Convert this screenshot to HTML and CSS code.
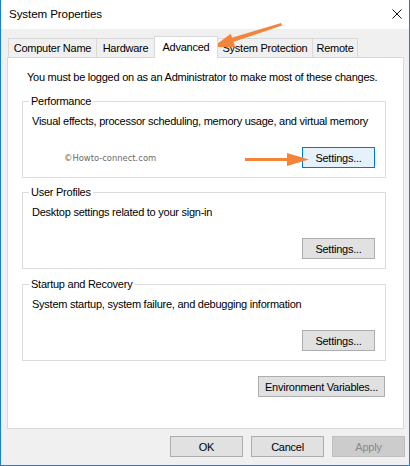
FILE: index.html
```html
<!DOCTYPE html>
<html lang="en">
<head>
  <meta charset="UTF-8">
  <meta name="viewport" content="width=device-width, initial-scale=1.0">
  <title>System Properties</title>
  <link rel="stylesheet" href="styles.css">
</head>
<body>
<div class="window">
  <div class="titlebar">
    <span class="title">System Properties</span>
    <svg class="close" width="10" height="10" viewBox="0 0 10 10">
      <path d="M0.5 0.5 L9.5 9.5 M9.5 0.5 L0.5 9.5" stroke="#111" stroke-width="1" fill="none"/>
    </svg>
  </div>

  <div class="content">
    <div class="tabs">
      <div class="tab tab-name">Computer Name</div>
      <div class="tab tab-hardware">Hardware</div>
      <div class="tab tab-advanced selected">Advanced</div>
      <div class="tab tab-protection">System Protection</div>
      <div class="tab tab-remote">Remote</div>
    </div>

    <div class="panel">
      <p class="note">You must be logged on as an Administrator to make most of these changes.</p>

      <fieldset class="group">
        <legend>Performance</legend>
        <p class="desc">Visual effects, processor scheduling, memory usage, and virtual memory</p>
        <div class="group-actions">
          <span class="watermark">©Howto-connect.com</span>
          <button class="btn focus">Settings...</button>
        </div>
      </fieldset>

      <fieldset class="group">
        <legend>User Profiles</legend>
        <p class="desc">Desktop settings related to your sign-in</p>
        <div class="group-actions">
          <button class="btn">Settings...</button>
        </div>
      </fieldset>

      <fieldset class="group group-last">
        <legend>Startup and Recovery</legend>
        <p class="desc">System startup, system failure, and debugging information</p>
        <div class="group-actions">
          <button class="btn">Settings...</button>
        </div>
      </fieldset>

      <div class="panel-actions">
        <button class="btn btn-wide">Environment Variables...</button>
      </div>
    </div>

    <div class="dialog-actions">
      <button class="btn">OK</button>
      <button class="btn">Cancel</button>
      <button class="btn" disabled>Apply</button>
    </div>
  </div>

  <!-- orange markers drawn over the dialog -->
  <svg class="marks" width="410" height="466" viewBox="0 0 410 466">
    <polygon points="281,23 282,25.5 233,42 231,38" fill="#f5843b"/>
    <polygon points="213,47 230.8,33.7 235.2,46.9" fill="#f5843b"/>
    <rect x="245" y="158" width="44" height="3" fill="#f5843b"/>
    <polygon points="287,153 309,159.5 287,166" fill="#f5843b"/>
  </svg>
</div>
</body>
</html>
```

FILE: styles.css
```css
body {
  margin: 0;
  font-family: "Liberation Sans", Arial, sans-serif;
  font-size: 11px;
  letter-spacing: -0.25px;
  color: #000;
  background: #fff;
}
.window {
  position: relative;
  width: 410px;
  height: 466px;
  box-sizing: border-box;
  border: 1px solid #1a7fd4;
  border-top: none;
  background: #f0f0f0;
  white-space: nowrap;
}
.titlebar {
  height: 29px;
  background: #fff;
  display: flex;
  align-items: center;
  justify-content: space-between;
  padding: 0 7px 2px 8px;
  box-sizing: border-box;
}
.title { font-size: 11.6px; letter-spacing: -0.1px; }
.close { display: block; }

.content { padding: 7px 5px 0 6px; }

.tabs {
  display: flex;
  align-items: flex-end;
  height: 21px;
  padding-left: 1px;
}
.tab {
  height: 19px;
  box-sizing: border-box;
  border: 1px solid #d9d9d9;
  border-bottom: none;
  background: #f0f0f0;
  display: flex;
  align-items: center;
  justify-content: center;
  margin-left: -1px;
}
.tab:first-child { margin-left: 0; }
.tab.selected {
  position: relative;
  z-index: 1;
  height: 22px;
  margin-bottom: -1px;
  padding-bottom: 2px;
  background: #fff;
}
.tab-name { width: 89px; }
.tab-hardware { width: 59px; }
.tab-advanced { width: 64px; }
.tab-protection { width: 96px; }
.tab-remote { width: 46px; }

.panel {
  height: 372px;
  box-sizing: border-box;
  border: 1px solid #d9d9d9;
  background: #fff;
  padding: 12px 17px 0 14px;
}
.note {
  margin: 0 0 9px 5px;
  line-height: 15px;
}

.group {
  margin: 0 0 7px 0;
  padding: 5px 10px 9px 9px;
  border: 1px solid #dcdcdc;
  min-width: 0;
}
.group-last { margin-top: 8px; }
.group legend {
  line-height: 15px;
  padding: 0 2px;
  margin-left: -3px;
}
.desc {
  margin: 0;
  line-height: 15px;
}
.group-actions {
  display: flex;
  align-items: center;
  justify-content: flex-end;
  margin-top: 18px;
}
.watermark {
  margin-right: auto;
  margin-left: 32px;
  font-family: "DejaVu Sans", Verdana, sans-serif;
  font-size: 8.4px;
  letter-spacing: 0;
  color: #6a6a6a;
}

.btn {
  width: 73px;
  height: 21px;
  padding: 0;
  font-family: inherit;
  font-size: 11px;
  letter-spacing: -0.25px;
  color: #000;
  background: #e1e1e1;
  border: 1px solid #adadad;
  border-radius: 0;
}
.btn.focus {
  background: #e5f1fb;
  border-color: #0078d7;
}
.btn:disabled {
  background: #cccccc;
  border-color: #bfbfbf;
  color: #8a8a8a;
}
.btn-wide { width: 127px; }

.panel-actions {
  display: flex;
  justify-content: flex-end;
  margin-top: 15px;
  margin-right: 1px;
}

.dialog-actions {
  display: flex;
  justify-content: flex-end;
  gap: 8px;
  margin-top: 7px;
  margin-right: -1px;
}

.marks {
  position: absolute;
  left: -1px;
  top: 0;
  pointer-events: none;
}
```
